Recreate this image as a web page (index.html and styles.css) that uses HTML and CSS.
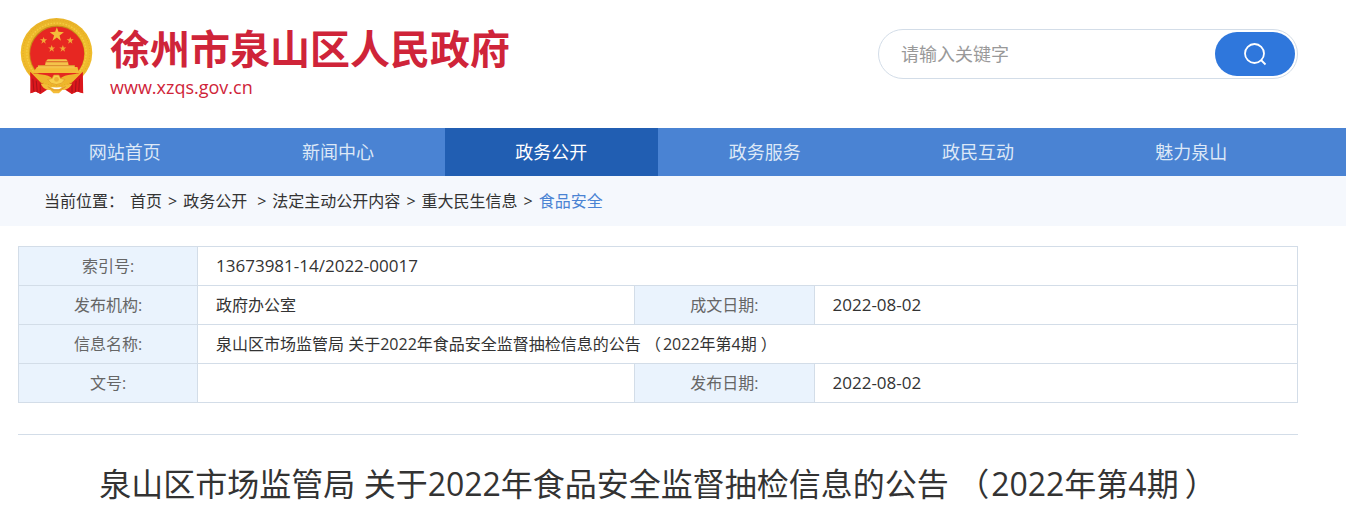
FILE: index.html
```html
<!DOCTYPE html>
<html lang="zh-CN">
<head>
<meta charset="utf-8">
<title>徐州市泉山区人民政府</title>
<link rel="stylesheet" href="styles.css">
</head>
<body>
<header class="header wrap">
  <a class="brand" href="#">
    <svg class="emblem" viewBox="30 22 216 231" aria-hidden="true">
      <defs>
        <linearGradient id="gold" x1="0" y1="0" x2="0" y2="1">
          <stop offset="0" stop-color="#e9b429"/><stop offset=".5" stop-color="#f0bd2c"/><stop offset="1" stop-color="#eeb62c"/>
        </linearGradient>
      </defs>
      <path d="M64 180L61 248L76 243L91 250L137 220L183 250L199 243L217 248L211 180Z" fill="#d9161c"/>
      <ellipse cx="138" cy="128" rx="106" ry="103" fill="url(#gold)"/>
      <ellipse cx="138" cy="128" rx="99" ry="97" fill="none" stroke="#e3aa25" stroke-width="3" stroke-dasharray="3 5"/>
      <ellipse cx="138" cy="128" rx="88" ry="88" fill="none" stroke="#f5cb42" stroke-width="4" stroke-dasharray="5 4"/>
      <ellipse cx="139" cy="130" rx="82" ry="83" fill="#c78c19"/>
      <circle cx="140" cy="131" r="80" fill="#e72722"/>
      <path d="M80 170L200 170L205 188L68 188Z" fill="#f4bb38"/>
      <path d="M83 164H192V174H83ZM106 155H172L174 165H104ZM112 147H167L172 154H106Z" fill="#f5c34b"/>
      <path d="M104 155H174M83 166H193" stroke="#ce7221" stroke-width="2"/>
      <path d="M68 188Q137 197 206 188Q190 208 137 211Q84 208 68 188Z" fill="#e42a20"/>
      <path d="M61 188L94 192Q116 194 126 204L115 218Q82 209 61 188ZM213 188L183 192Q160 194 149 204L160 218Q194 209 213 188Z" fill="#efb42d"/>
      <path d="M60 184L91 216L108 225L91 250L76 243L61 248ZM216 184L184 216L167 225L183 250L199 243L217 248Z" fill="#dc171c"/>
      <path d="M68 205L71 242M78 211L81 244M90 218L90 245M206 205L204 242M196 211L194 244M184 218L184 245" stroke="#a8121a" stroke-width="3"/>
      <path d="M112 207L125 204L130 194L145 194L150 204L163 207L153 218Q138 226 122 218Z" fill="#f8cf4c" stroke="#dc9724" stroke-width="2"/>
      <circle cx="138" cy="207" r="7" fill="#eab033"/>
      <path d="M91 219Q115 221 121 229L132 236H145L156 229Q164 221 185 219Q174 240 155 238L145 248H129L119 238Q100 240 91 219Z" fill="#f4bd38"/>
      <path d="M112 228L127 238H149L165 228" fill="none" stroke="#cf8523" stroke-width="2"/>
      <path d="M139 52L144 66L160 67L147 77L151 92L139 83L126 92L131 77L118 67L134 66Z" fill="#f4bd3b"/>
      <g fill="#f1aa38">
        <path id="star" d="M100 81L102.500 88L110 88L104 93L106 101L100 96L93 101L96 93L89 88L97 88Z"/>
        <use href="#star" x="79"/><use href="#star" x="24" y="24"/><use href="#star" x="57" y="24"/>
      </g>
    </svg>
    <span class="brand-text">
      <span class="brand-name">徐州市泉山区人民政府</span>
      <span class="brand-url">www.xzqs.gov.cn</span>
    </span>
  </a>
  <form class="search" role="search">
    <input class="search-input" type="text" placeholder="请输入关键字" aria-label="请输入关键字">
    <button class="search-button" type="button" aria-label="搜索">
      <svg class="search-icon" viewBox="0 0 24 24" aria-hidden="true"><circle cx="11.500" cy="11.500" r="9.500"/><path d="M18 18L22.500 22.500"/></svg>
    </button>
  </form>
</header>
<nav class="nav">
  <div class="nav-list wrap">
    <a class="nav-item" href="#">网站首页</a>
    <a class="nav-item" href="#">新闻中心</a>
    <a class="nav-item active" href="#">政务公开</a>
    <a class="nav-item" href="#">政务服务</a>
    <a class="nav-item" href="#">政民互动</a>
    <a class="nav-item" href="#">魅力泉山</a>
  </div>
</nav>
<div class="crumb-bar">
  <div class="crumbs wrap">
    <span class="crumb-label">当前位置：</span>
    <a href="#">首页</a><span>&gt;</span><a class="crumb-wide" href="#">政务公开</a><span>&gt;</span><a href="#">法定主动公开内容</a><span>&gt;</span><a href="#">重大民生信息</a><span>&gt;</span><a class="current" href="#">食品安全</a>
  </div>
</div>
<main class="main wrap">
  <table class="info">
    <colgroup><col class="col-label"><col class="col-wide"><col class="col-label"><col></colgroup>
    <tbody>
      <tr><th scope="row">索引号:</th><td class="number" colspan="3">13673981-14/2022-00017</td></tr>
      <tr><th scope="row">发布机构:</th><td>政府办公室</td><th scope="row">成文日期:</th><td class="number">2022-08-02</td></tr>
      <tr><th scope="row">信息名称:</th><td colspan="3">泉山区市场监管局 关于2022年食品安全监督抽检信息的公告 （<span class="issue">2022年第4期</span>）</td></tr>
      <tr><th scope="row">文号:</th><td></td><th scope="row">发布日期:</th><td class="number">2022-08-02</td></tr>
    </tbody>
  </table>
  <h1 class="title">泉山区市场监管局 关于2022年食品安全监督抽检信息的公告 （<span class="issue">2022年第4期</span>）</h1>
</main>
</body>
</html>
```
FILE: styles.css
```css
* { box-sizing: border-box; }
body {
  margin: 0;
  background: #fff;
  color: #333;
  font: 16px/24px "Open Sans", "Noto Sans CJK SC", sans-serif;
}
a { color: inherit; text-decoration: none; }
.wrap { padding-left: 18px; padding-right: 48px; }

.header {
  display: flex;
  justify-content: space-between;
  align-items: flex-start;
  height: 128px;
}
.brand { display: flex; gap: 17px; padding: 17px 0 0 2px; color: #cf2439; }
.emblem { width: 73px; height: 78px; }
.brand-text { display: flex; flex-direction: column; padding-top: 6px; }
.brand-name { font-size: 40px; font-weight: 700; line-height: 52px; }
.brand-url { font-size: 18px; line-height: 24px; }

.search {
  display: flex;
  width: 420px;
  height: 50px;
  margin-top: 29px;
  padding: 2px;
  border: 1px solid #d3dde8;
  border-radius: 25px;
}
.search-input {
  flex: 1;
  min-width: 0;
  padding: 0 20px;
  border: 0;
  outline: 0;
  background: none;
  font: inherit;
  font-size: 18px;
}
.search-input::placeholder { color: #999; opacity: 1; }
.search-button {
  display: flex;
  align-items: center;
  justify-content: center;
  width: 80px;
  height: 44px;
  padding: 0;
  border: 0;
  border-radius: 22px;
  background: #2f77dc;
}
.search-icon {
  width: 24px;
  height: 24px;
  fill: none;
  stroke: #fff;
  stroke-width: 1.8;
}

.nav { background: #4a83d3; }
.nav-list { display: grid; grid-template-columns: repeat(6, 1fr); }
.nav-item {
  color: #dde8f7;
  font-size: 18px;
  line-height: 48px;
  text-align: center;
}
.nav-item.active { background: #215eb2; color: #fff; }

.crumb-bar { background: #f5f8fd; }
.crumbs { display: flex; gap: 6px; line-height: 50px; }
.crumb-label { padding-left: 26px; }
.crumb-wide { padding-right: 4px; }
.current { color: #4a83d3; }

.main { padding-top: 20px; }
.info { width: 100%; border-collapse: collapse; table-layout: fixed; }
.col-label { width: 14%; }
.col-wide { width: 34.2%; }
.info th, .info td { height: 39px; padding: 0 18px; border: 1px solid #d3dde8; }
.info th { background: #eaf3fd; color: #666; font-weight: 400; }
.info td { text-align: left; }
.info .number { font-size: 17px; }
.issue { padding: 0 4px 0 2px; }
.title {
  margin: 31px 0 0;
  padding: 26px 0 0;
  border-top: 1px solid #d3dde8;
  font-size: 32px;
  font-weight: 400;
  line-height: 46px;
  text-align: center;
}
.title .issue { padding: 0 6px 0 2px; }
```
